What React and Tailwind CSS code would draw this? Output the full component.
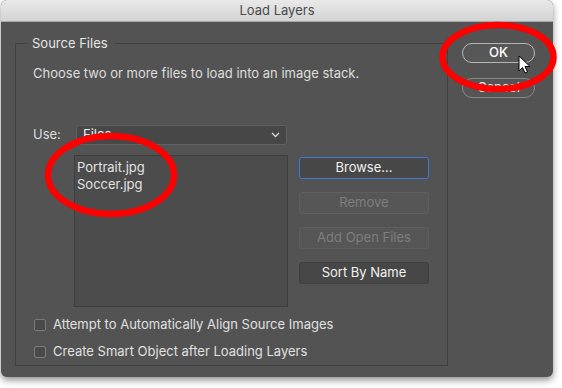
import React from 'react';

const FONT = { fontFamily: 'Inter, "Noto Sans", sans-serif' };

const SIDE_BUTTONS = [
  { label: 'Browse...', kind: 'focus' },
  { label: 'Remove', kind: 'disabled' },
  { label: 'Add Open Files', kind: 'disabled' },
  { label: 'Sort By Name', kind: 'normal' },
];

const FILES = ['Portrait.jpg', 'Soccer.jpg'];

const OPTIONS = [
  'Attempt to Automatically Align Source Images',
  'Create Smart Object after Loading Layers',
];

function SideButton({ label, kind }) {
  const cls =
    kind === 'focus'
      ? 'bg-[#474747] border-[#3d7bd6] text-[#f2f2f2]'
      : kind === 'disabled'
      ? 'bg-[#565656] border-[#5f5f5f] text-[#7e7e7e]'
      : 'bg-[#474747] border-[#3f3f3f] text-[#f2f2f2]';
  return (
    <div className={`h-[22px] w-[130px] flex items-center justify-center rounded-[3px] border text-[13px] ${cls}`}>
      {label}
    </div>
  );
}

export default function App() {
  return (
    <div className="w-[562px] h-[388px] bg-white pl-[1px]" style={FONT}>
      <div className="relative w-[552px] h-[377px] rounded-[6px] bg-[#535353] shadow-[0_3px_7px_rgba(0,0,0,0.45)] flex flex-col">
        {/* title bar */}
        <div className="h-[22px] rounded-t-[6px] bg-gradient-to-b from-[#e9e9e9] to-[#d3d3d3] border-b border-[#a8a8a8] flex items-center justify-center text-[13px] text-[#4a4a4a]">
          Load Layers
        </div>

        <div className="flex flex-1">
          <fieldset className="ml-[14px] mt-[13px] w-[433px] h-[331px] shrink-0 border border-[#404040] pl-[17px] pt-[14px] text-[13px] text-[#dedede]">
            <legend className="ml-[-7px] px-[6px] text-[13px] leading-4 text-[#e6e6e6]">Source Files</legend>
            <div className="leading-4">Choose two or more files to load into an image stack.</div>

            <div className="flex items-center mt-[44px]">
              <span className="w-[43px]">Use:</span>
              <div className="h-[20px] w-[211px] flex items-center justify-between pl-[6px] pr-[6px] rounded-[3px] bg-[#474747] border border-[#616161] text-[#f0f0f0]">
                <span>Files</span>
                <svg width="9" height="6" viewBox="0 0 9 6" fill="none">
                  <polyline points="1,1 4.5,4.5 8,1" stroke="#d8d8d8" strokeWidth="1.3" />
                </svg>
              </div>
            </div>

            <div className="flex mt-[10px] ml-[41px] gap-[11px]">
              <div className="w-[214px] h-[152px] bg-[#4c4c4c] border border-[#3e3e3e] px-[2px] pt-[3px] text-[#e2e2e2] leading-[17px]">
                {FILES.map((f) => (
                  <div key={f}>{f}</div>
                ))}
              </div>
              <div className="flex flex-col gap-[13px] pt-[2px]">
                {SIDE_BUTTONS.map((b) => (
                  <SideButton key={b.label} {...b} />
                ))}
              </div>
            </div>

            <div className="flex flex-col gap-[15px] mt-[12px] ml-[1px]">
              {OPTIONS.map((o) => (
                <div key={o} className="flex items-center gap-[7px] h-[12px]">
                  <div className="w-[12px] h-[12px] rounded-[2px] bg-[#4a4a4a] border border-[#7b7b7b]" />
                  <span className="text-[13px] text-[#e0e0e0]">{o}</span>
                </div>
              ))}
            </div>
          </fieldset>

          <div className="ml-[14px] mt-[21px] flex flex-col gap-[15px]">
            <div className="w-[73px] h-[20px] rounded-full border border-[#b8b8b8] bg-[#575757] flex items-center justify-center text-[13px] font-medium text-white">
              OK
            </div>
            <div className="w-[73px] h-[20px] rounded-full border border-[#8a8a8a] bg-[#555555] flex items-center justify-center text-[13px] text-[#e8e8e8]">
              Cancel
            </div>
          </div>
        </div>

        {/* annotation overlay: red ellipses and mouse cursor */}
        <svg className="absolute left-[-1px] top-0 pointer-events-none" width="562" height="388" viewBox="0 0 562 388">
          <ellipse cx="498" cy="57" rx="55.5" ry="32" fill="none" stroke="#ff0000" strokeWidth="6.5" />
          <ellipse cx="111" cy="175" rx="63" ry="39" fill="none" stroke="#ff0000" strokeWidth="6.5" />
          <path
            d="M519 56 L519 71 L522.5 67.5 L525 73 L527.5 72 L525 66.5 L530 66.5 Z"
            fill="#ffffff"
            stroke="#000000"
            strokeWidth="1"
            strokeLinejoin="round"
          />
        </svg>
      </div>
    </div>
  );
}
